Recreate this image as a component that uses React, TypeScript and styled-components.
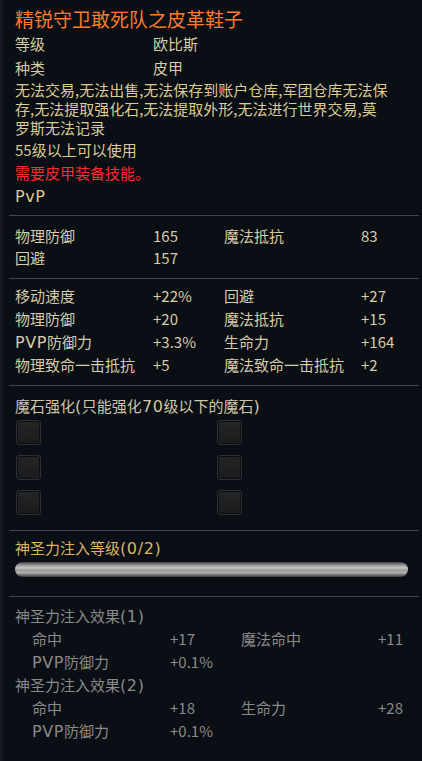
import styled, { createGlobalStyle } from 'styled-components';

const Global = createGlobalStyle`
  html, body {
    margin: 0;
    padding: 0;
    background: #0a0e15;
  }
  body {
    font-family: "Noto Sans CJK SC", "Noto Sans", sans-serif;
  }
`;

const Panel = styled.div`
  width: 422px;
  height: 761px;
  box-sizing: border-box;
  background: #0a0e15;
  border-left: 3px solid #151922;
  padding: 6px 3px 0 12px;
  overflow: hidden;
`;

const Title = styled.div`
  color: #ff7a2c;
  font-size: 19px;
  line-height: 26px;
`;

const Line = styled.div<{ $color?: string; $lh?: number }>`
  color: ${(p) => p.$color || '#d6cca8'};
  font-size: 15px;
  line-height: ${(p) => p.$lh || 23}px;
  white-space: nowrap;
`;

// the game font draws latin letters and brackets wider than the CJK font does
const Wide = styled.span`
  font-family: "DejaVu Sans", sans-serif;
  font-size: 16px;
  line-height: 1;
  letter-spacing: 0.6px;
`;

const InfoRow = styled.div`
  display: grid;
  grid-template-columns: 138px 1fr;
  color: #d6cca8;
  font-size: 15px;
  line-height: 24px;
`;

const Section = styled.div<{ $pt: number; $pb: number }>`
  border-top: 1px solid #3c4658;
  margin-left: -6px;
  padding: ${(p) => p.$pt}px 0 ${(p) => p.$pb}px 6px;
`;

const StatGrid = styled.div<{ $indent?: number; $lh: number; $color?: string }>`
  display: grid;
  grid-template-columns: 138px 71px 137px 1fr;
  padding-left: ${(p) => p.$indent || 0}px;
  color: ${(p) => p.$color || '#d6cca8'};
  font-size: 15px;
  line-height: ${(p) => p.$lh}px;
  white-space: nowrap;
`;

const SocketGrid = styled.div`
  display: grid;
  grid-template-columns: 201px 1fr;
  row-gap: 10px;
  margin-top: 3px;
  padding-left: 1px;
`;

const Socket = styled.div`
  width: 25px;
  height: 25px;
  box-sizing: border-box;
  border-radius: 3px;
  border: 1px solid #2c2f33;
  background: linear-gradient(#242526, #1a1b1c);
  box-shadow: inset 0 0 0 1px #0e0f10;
`;

const Bar = styled.div`
  height: 15px;
  margin: 3px 11px 0 0;
  border-radius: 8px;
  background: linear-gradient(
    #3c3c3c 0%,
    #8e8e8e 18%,
    #c4c4c4 38%,
    #9a9a9a 55%,
    #b0b0b0 72%,
    #6a6a6a 88%,
    #3a3a3a 100%
  );
`;

const Txt = ({ text, digits }: { text: string; digits?: boolean }) => {
  const re = digits ? /([()\/A-Za-z0-9]+)/ : /([()\/A-Za-z]+)/;
  return (
    <>
      {text.split(re).map((part, i) =>
        i % 2 === 1 ? <Wide key={i}>{part}</Wide> : part
      )}
    </>
  );
};

const restrictions = [
  '无法交易,无法出售,无法保存到账户仓库,军团仓库无法保',
  '存,无法提取强化石,无法提取外形,无法进行世界交易,莫',
  '罗斯无法记录',
];

const stats1 = [
  ['物理防御', '165', '魔法抵抗', '83'],
  ['回避', '157', '', ''],
];

const stats2 = [
  ['移动速度', '+22%', '回避', '+27'],
  ['物理防御', '+20', '魔法抵抗', '+15'],
  ['PVP防御力', '+3.3%', '生命力', '+164'],
  ['物理致命一击抵抗', '+5', '魔法致命一击抵抗', '+2'],
];

const effects = [
  {
    title: '神圣力注入效果(1)',
    rows: [
      ['命中', '+17', '魔法命中', '+11'],
      ['PVP防御力', '+0.1%', '', ''],
    ],
  },
  {
    title: '神圣力注入效果(2)',
    rows: [
      ['命中', '+18', '生命力', '+28'],
      ['PVP防御力', '+0.1%', '', ''],
    ],
  },
];

const Cells = ({ row }: { row: string[] }) => (
  <>
    {row.map((c, i) => (
      <span key={i}>
        <Txt text={c} />
      </span>
    ))}
  </>
);

const App = () => {
  return (
    <>
      <Global />
      <Panel>
        <Title>精锐守卫敢死队之皮革鞋子</Title>
        <InfoRow>
          <span>等级</span>
          <span>欧比斯</span>
        </InfoRow>
        <InfoRow>
          <span>种类</span>
          <span>皮甲</span>
        </InfoRow>
        {restrictions.map((t) => (
          <Line key={t} $color="#dccb94" $lh={19}>
            {t}
          </Line>
        ))}
        <Line $color="#dccb94" style={{ marginTop: 1 }}>55级以上可以使用</Line>
        <Line $color="#ff2c2c">需要皮甲装备技能。</Line>
        <Line $color="#dccb94">
          <Txt text="PvP" />
        </Line>

        <Section $pt={9} $pb={9} style={{ marginTop: 8 }}>
          <StatGrid $lh={22}>
            {stats1.map((r, i) => (
              <Cells key={i} row={r} />
            ))}
          </StatGrid>
        </Section>

        <Section $pt={5} $pb={9}>
          <StatGrid $lh={23}>
            {stats2.map((r, i) => (
              <Cells key={i} row={r} />
            ))}
          </StatGrid>
        </Section>

        <Section $pt={9} $pb={15}>
          <Line $color="#cfc6a6" $lh={22}>
            <Txt text="魔石强化(只能强化70级以下的魔石)" digits />
          </Line>
          <SocketGrid>
            {[0, 1, 2, 3, 4, 5].map((i) => (
              <Socket key={i} />
            ))}
          </SocketGrid>
        </Section>

        <Section $pt={6} $pb={19}>
          <Line $color="#dcb565" $lh={22}>
            <Txt text="神圣力注入等级(0/2)" digits />
          </Line>
          <Bar />
        </Section>

        <Section $pt={7} $pb={0}>
          {effects.map((e) => (
            <div key={e.title}>
              <Line $color="#8a8a88">
                <Txt text={e.title} digits />
              </Line>
              <StatGrid $indent={17} $lh={23} $color="#8a8a88">
                {e.rows.map((r, i) => (
                  <Cells key={i} row={r} />
                ))}
              </StatGrid>
            </div>
          ))}
        </Section>
      </Panel>
    </>
  );
};

export default App;
